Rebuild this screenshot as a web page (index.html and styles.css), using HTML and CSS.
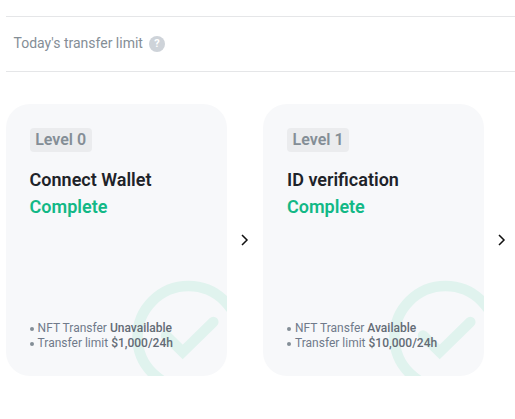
FILE: index.html
```html
<!DOCTYPE html>
<html lang="en">
<head>
<meta charset="utf-8">
<title>Transfer limit</title>
<link rel="stylesheet" href="styles.css">
</head>
<body>
<main class="page">
  <header class="limit-bar">
    <span>Today's transfer limit</span>
    <span class="help">?</span>
  </header>
  <section class="levels">
    <article class="card">
      <svg class="watermark" viewBox="0 0 221 272"><circle cx="182.5" cy="233" r="51"/><path class="tick" d="M160 231.5 L176.7 248 L207.3 218"/></svg>
      <span class="badge">Level 0</span>
      <h2 class="title">Connect Wallet</h2>
      <p class="status">Complete</p>
      <ul class="details">
        <li>NFT Transfer <b>Unavailable</b></li>
        <li>Transfer limit <b>$1,000/24h</b></li>
      </ul>
    </article>
    <div class="next"><svg viewBox="0 0 8 12"><path d="M1 1 L6 6 L1 11"/></svg></div>
    <article class="card card-verify">
      <svg class="watermark" viewBox="0 0 221 272"><circle cx="182.5" cy="233" r="51"/><path class="tick" d="M160 231.5 L176.7 248 L207.3 218"/></svg>
      <span class="badge">Level 1</span>
      <h2 class="title">ID verification</h2>
      <p class="status">Complete</p>
      <ul class="details">
        <li>NFT Transfer <b>Available</b></li>
        <li>Transfer limit <b>$10,000/24h</b></li>
      </ul>
    </article>
    <div class="next"><svg viewBox="0 0 8 12"><path d="M1 1 L6 6 L1 11"/></svg></div>
  </section>
</main>
</body>
</html>
```
FILE: styles.css
```css
* { box-sizing: border-box; }

body {
  margin: 0;
  overflow: hidden;
  background: #fff;
  font-family: Roboto, sans-serif;
}

.page { padding: 16px 0 0 6px; }

.limit-bar {
  display: flex;
  align-items: center;
  gap: 6px;
  height: 56px;
  padding: 0 0 2px 7.5px;
  border-top: 1px solid #e5e6e8;
  border-bottom: 1px solid #e5e6e8;
  color: #848e96;
  font-size: 14px;
  line-height: 20px;
}

.help {
  width: 16px;
  height: 16px;
  margin-top: 2px;
  border-radius: 50%;
  background: #ced3d9;
  color: #fff;
  font-size: 11px;
  font-weight: 700;
  line-height: 16px;
  text-align: center;
}

.levels {
  display: flex;
  margin-top: 32px;
}

.card {
  position: relative;
  display: flex;
  flex: none;
  flex-direction: column;
  align-items: flex-start;
  width: 221px;
  height: 272px;
  padding: 24px 24px 25px 23.6px;
  overflow: hidden;
  border-radius: 24px;
  background: #f7f8fa;
}

.card-verify { padding-left: 24px; }

.watermark {
  position: absolute;
  inset: 0;
  width: 221px;
  height: 272px;
  fill: none;
  stroke: #e0f3ee;
  stroke-width: 10.5;
}

.tick { stroke-linecap: round; }

.badge {
  height: 24px;
  padding: 0 5.6px;
  border-radius: 4px;
  background: #ebecee;
  color: #848e96;
  font-size: 16px;
  font-weight: 600;
  line-height: 24px;
}

.title, .status {
  margin: 0;
  font-size: 18px;
  font-weight: 600;
  line-height: 27px;
}

.title {
  margin-top: 14px;
  color: #1e2329;
}

.status { color: #12b886; }

.details {
  position: relative;
  margin: auto 0 0;
  padding: 0;
  list-style: none;
  color: #707a8a;
  font-size: 12px;
  line-height: 15px;
  white-space: nowrap;
}

.details li {
  display: flex;
  align-items: center;
  white-space: pre;
}

.details li::before {
  content: "";
  width: 4px;
  height: 4px;
  margin: 1px 4px 0 0;
  border-radius: 50%;
  background: #848e96;
}

.details b { font-weight: 500; color: #636b75; }

.next {
  display: flex;
  flex: none;
  align-items: center;
  justify-content: center;
  width: 36px;
  height: 272px;
}

.next svg {
  width: 8px;
  height: 12px;
  fill: none;
  stroke: #111;
  stroke-width: 1.5;
}
```
